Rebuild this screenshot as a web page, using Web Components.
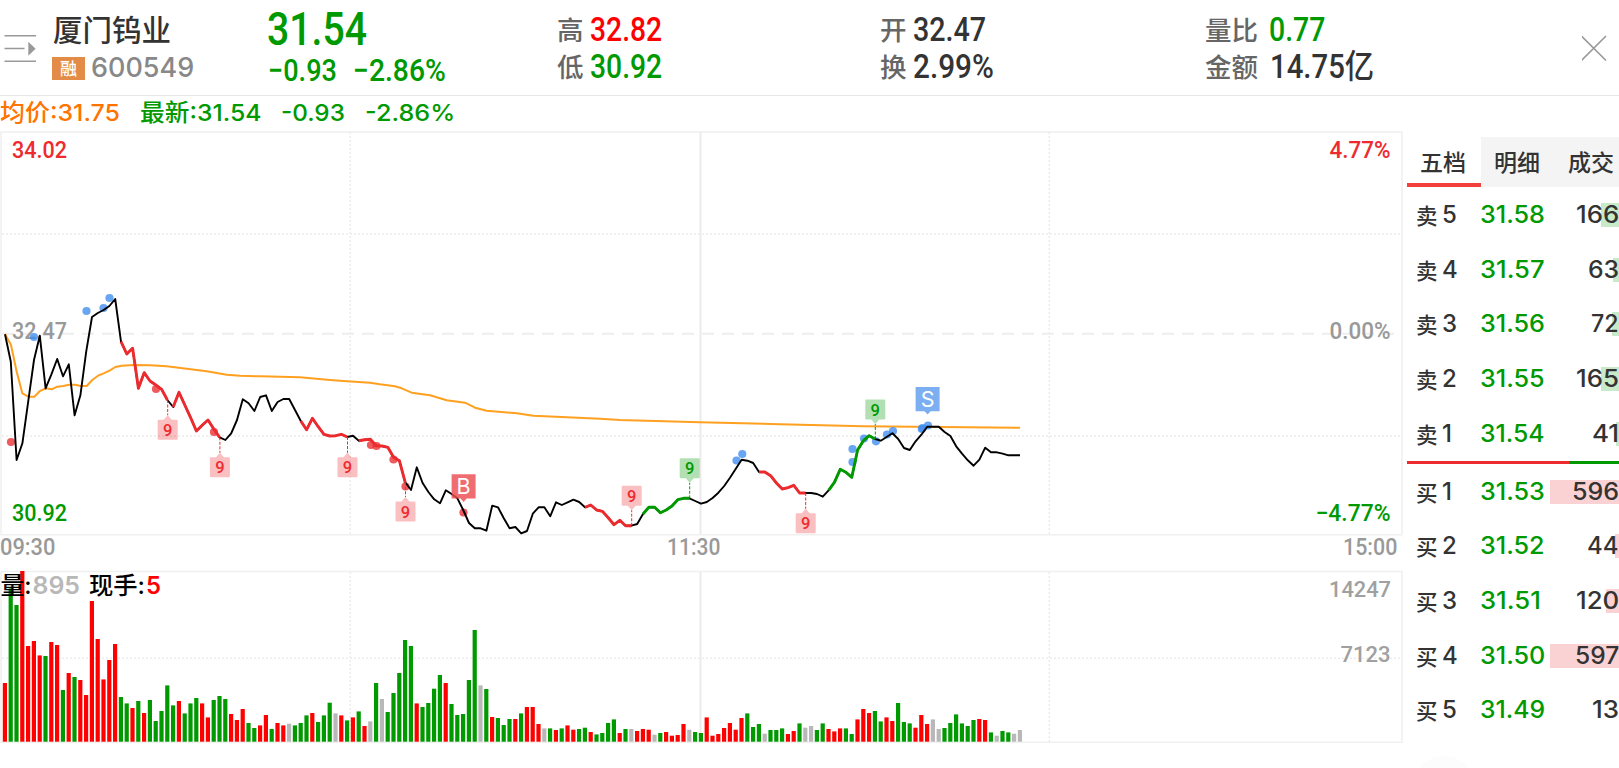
<!DOCTYPE html>
<html lang="zh-CN">
<head>
<meta charset="utf-8">
<title>厦门钨业 600549</title>
<style>
    html, body { margin: 0; height: 100%; background: #fff; overflow: hidden; }
    body { font-family: Inter, "Noto Sans CJK SC", sans-serif; color: #333; }
</style>
</head>
<body>
<stock-page></stock-page>

<script>
const STEP = 5.8;
const RED = "#ed2b2f", GREEN = "#009900";
const minuteX = minute => 5 + STEP * minute;

// one line of text, stretched to the width it is given
customElements.define("fit-text", class extends HTMLElement {
    connectedCallback() {
        let root = this.attachShadow({ mode: "open" });
        let width = +this.getAttribute("w");
        root.innerHTML = `<style>
            :host{display:block;flex:none;width:${width}px;white-space:nowrap}
            span{display:inline-block;transform-origin:0 50%}
            </style><span><slot></slot></span>`;
        let span = root.querySelector("span");
        span.style.transform = `scaleX(${width / span.offsetWidth})`;
    }
});

customElements.define("quote-pair", class extends HTMLElement {
    connectedCallback() {
        this.attachShadow({ mode: "open" }).innerHTML = `<style>
            :host{display:flex;height:37px;font:500 33px/37px Roboto,"Noto Sans CJK SC",sans-serif}
            .label{font:500 26.5px/36px "Noto Sans CJK SC",sans-serif;color:#666;margin-right:${this.getAttribute("gap") || 6}px}
            </style><span class="label">${this.getAttribute("label")}</span><slot></slot>`;
    }
});

customElements.define("quote-header", class extends HTMLElement {
    connectedCallback() {
        this.attachShadow({ mode: "open" }).innerHTML = `<style>
            :host{display:grid;box-sizing:border-box;height:96px;border-bottom:1px solid #e6e6e6;
                grid-template-columns:52px 215px 290px 323px 325px 1fr 37px}
            svg{display:block}
            .name{font:500 29.5px/42px "Noto Sans CJK SC",sans-serif;padding:7px 0 0 1px;height:42px}
            .code{display:flex;align-items:center;height:36px;font:500 27.5px/36px Inter,sans-serif;color:#888}
            .badge{width:33px;height:23px;margin:2px 6px 0 0;background:#e38c47;color:#fff;text-align:center;
                font:500 17px/22px "Noto Sans CJK SC",sans-serif}
            .price{font:500 45.5px/42px Roboto,sans-serif;color:#090;padding-top:9px;height:44px}
            .change{display:flex;gap:16px;padding-left:1px;font:500 31px/36px Roboto,sans-serif;color:#090}
            .pairs{padding-top:11px}
            .up{color:#f00}.down{color:#090}
            </style>
            <svg width="52" height="95" fill="none" stroke="#999" stroke-width="1.5">
                <path d="M4.5 35.8H36M4.5 48.6H24.5M4.5 61.2H36"/><path d="M28.3 41.7V55.7L35.6 48.7z" fill="#999" stroke="none"/>
            </svg>
            <div><div class="name">厦门钨业</div>
                <div class="code"><span class="badge">融</span><fit-text w="103">600549</fit-text></div></div>
            <div><div class="price"><fit-text w="100">31.54</fit-text></div>
                <div class="change"><fit-text w="69">−0.93</fit-text><fit-text w="93">−2.86%</fit-text></div></div>
            <div class="pairs">
                <quote-pair label="高"><fit-text class="up" w="72">32.82</fit-text></quote-pair>
                <quote-pair label="低"><fit-text class="down" w="72">30.92</fit-text></quote-pair></div>
            <div class="pairs">
                <quote-pair label="开"><fit-text w="73">32.47</fit-text></quote-pair>
                <quote-pair label="换"><fit-text w="81">2.99%</fit-text></quote-pair></div>
            <div class="pairs">
                <quote-pair label="量比" gap="11"><fit-text class="down" w="56">0.77</fit-text></quote-pair>
                <quote-pair label="金额" gap="12"><fit-text w="104">14.75亿</fit-text></quote-pair></div>
            <svg width="37" height="95" fill="none" stroke="#999" stroke-width="1.6"><path d="M-.5 36L24 60.5M24 36L-.5 60.5"/></svg>`;
    }
});

customElements.define("price-chart", class extends HTMLElement {
    // y of every minute from 09:30
    price = [334.3,361.7,460,443.3,401.7,360,335.7,388.3,374.3,359,376.3,364.3,415.3,395.3,351.7,317,313,310,306,299,
        341.7,354,348.3,388.3,372.7,381,385,389.3,400,407,392.3,405,417.7,431,425.3,420,429,437.3,440,433.3,420,
        399.3,403.3,411,397,395.3,411,402,399,399,410,421,429.7,418.3,426.7,434.3,436,435.7,434.3,437,435.7,440.7,
        439.7,439.3,445.7,446,447.3,457.3,460.7,482.3,490,467.3,483,492,499.3,503.3,490.3,494,498.3,510,523,528.3,
        528.3,530.7,505.7,507.3,518.3,528.3,527,533.3,531,513.7,507.3,507.3,516.3,502.3,505,502.3,499.7,502,507.3,
        505,510,511.3,517.7,524.7,520.3,525.7,525.7,524,514,507.3,507.3,512.7,510,506,499.7,498.3,498.3,501,503.7,
        502,498,492.7,486,477.7,468.7,459.7,460.7,463,472,472,475.7,483,489,487.7,485.3,493,493,493,494,496.7,
        490.3,482.3,469.3,472.3,477.3,450,440.7,435.7,439,440.7,437,433.3,439,448,450,441.3,434.7,426.7,426.7,426.7,
        432,436,446.3,453.7,460.3,465.7,459.7,447.7,452.3,452.3,453.7,455.3,455.3,455.3];
    average = `5,334 11,345 16.7,371.7 22.3,393.3 28.3,396.7 34.3,396.7 40,391 45.7,388.3 51.7,389.3 57.3,386.7
        63.3,386 69,384.7 75,384.7 80.7,386 86.7,386 92.3,380 98,375.7 103.7,373.3 110,370.3 115.3,367 121.7,365.7
        133.3,365 150,365.3 166.7,366.3 186.7,368.7 206.7,371.3 226.7,374.7 240,375.8 260,376.3 300,377.3 330,380
        347,381.3 370,382.7 380,384.3 395,386.3 401.7,388.3 411.7,392.7 430,395.3 446.7,400.3 465,402.7 475,407.7
        486.7,410.7 516.7,413.3 533.3,415.8 600,418.7 620,420 700,422.3 780,424.2 863,426.3 1020,427.8`;
    // nine-count runs: first minute, last minute, colour, top of the tag
    runs = [[20, 28, RED, 419.7], [29, 37, RED, 457.3], [51, 59, RED, 457.3], [61, 69, RED, 501.5],
        [100, 108, RED, 485.7], [110, 118, GREEN, 458.3], [130, 138, RED, 513.3], [142, 150, GREEN, 399.5]];
    dots = [[34, 337, 1], [86.5, 311, 1], [103.5, 308, 1], [109.5, 298, 1], [11, 442], [156, 389], [214, 432],
        [371, 445], [376.5, 446], [393.5, 459.5], [405.5, 486.5], [463.5, 512.5], [736.5, 460.5, 1], [742.3, 454, 1],
        [852.5, 449, 1], [852.5, 462, 1], [864, 438.5, 1], [876, 441.3, 1], [887, 434.5, 1], [893, 431, 1],
        [921.8, 429, 1], [922.6, 428, 1], [928, 425.5, 1]];
    line(from, to, color = "#000", width = 1.9) {
        let points = this.price.slice(from, to + 1).map((y, i) => minuteX(from + i).toFixed(1) + "," + y);
        return `<polyline points="${points.join(" ")}" stroke="${color}" stroke-width="${width}"/>`;
    }
    tag(minute, color, top) {
        let x = minuteX(minute) + .3, y = this.price[minute], below = top > y;
        let edge = below ? top : top + 20, tip = below ? top - 4.5 : top + 24.5;
        return `<path d="M${x} ${y}V${tip}" stroke="${color}" stroke-width="1" stroke-dasharray="3 1.5"/>
            <g fill="${color}"><path fill-opacity=".3" d="M${x - 4} ${edge}L${x} ${tip}L${x + 4} ${edge}z"/>
            <rect fill-opacity=".3" x="${x - 10}" y="${top}" width="20" height="20" rx="1.2"/>
            <text x="${x}" y="${top + 16}" font-size="16.5" text-anchor="middle">9</text></g>`;
    }
    trade(minute, top, color, letter) {
        let x = minuteX(minute) + .4;
        return `<path fill="${color}" fill-opacity=".82" d="M${x - 12} ${top}h24v24.2h-9L${x} ${top + 27.6}L${x - 3} ${top + 24.2}h-9z"/>
            <text class="letter" x="${x}" y="${top + 19.8}" fill="#fff" text-anchor="middle">${letter}</text>`;
    }
    connectedCallback() {
        this.attachShadow({ mode: "open" }).innerHTML = `<style>
            :host{display:block;height:406px}
            svg{display:block}
            text{font-family:Roboto,sans-serif;font-weight:500}
            .axis text{font-size:23px}
            .letter{font:400 21.5px Inter,sans-serif}
            </style>
            <svg width="1404" height="406" viewBox="0 131 1404 406" fill="none" stroke-linejoin="round">
            <g stroke="#f0f0f0" stroke-width="1.5">
                <path d="M1 132H1402V534.7H1z"/><path d="M700.5 132V534" stroke="#ebebeb" stroke-width="2"/>
                <path d="M2 234H1402M2 436H1402M350.3 132V536M1049.3 132V536" stroke-dasharray="2 2" stroke="#ececec"/>
                <path d="M2 333.7H1402" stroke-dasharray="12 8" stroke="#eee" stroke-width="2"/>
            </g>
            <g class="axis">
                <text x="12" y="157.5" textLength="55" lengthAdjust="spacingAndGlyphs" fill="${RED}">34.02</text>
                <text x="12" y="339.3" textLength="55" lengthAdjust="spacingAndGlyphs" fill="#999">32.47</text>
                <text x="12" y="521.3" textLength="55" lengthAdjust="spacingAndGlyphs" fill="#090">30.92</text>
                <text x="1329.5" y="157.5" textLength="61" lengthAdjust="spacingAndGlyphs" fill="${RED}">4.77%</text>
                <text x="1329.5" y="339.3" textLength="61" lengthAdjust="spacingAndGlyphs" fill="#999">0.00%</text>
                <text x="1315.5" y="521.3" textLength="75" lengthAdjust="spacingAndGlyphs" fill="#090">−4.77%</text>
            </g>
            <polyline points="${this.average}" stroke="#ffa020" stroke-width="2"/>
            ${this.dots.map(([x, y, sell]) => `<circle cx="${x}" cy="${y}" r="4.1" fill="${sell ? "#3d8cf0" : "#e92c30"}" fill-opacity=".78"/>`).join("")}
            ${this.line(0, 175)}
            ${this.runs.map(([from, to, color]) => this.line(from, to, color, 2.9)).join("")}
            ${this.runs.map(([, to, color, top]) => this.tag(to, color, top)).join("")}
            ${this.trade(79, 474.3, "#eb4d50", "B")}${this.trade(159, 387, "#5e9eef", "S")}
            </svg>`;
    }
});

customElements.define("volume-chart", class extends HTMLElement {
    // bar heights in thirds of a pixel, then r(ise), f(all) or n(o change) for each of them
    heights = [176,460,410,512,287,302,259,257,299,290,155,206,194,185,140,422,308,187,245,293,134,115,101,122,86,125,
        62,92,169,109,122,85,115,131,115,73,125,137,128,83,65,98,56,41,49,80,38,56,49,54,49,56,79,86,59,79,117,85,79,
        64,73,91,47,61,176,128,89,146,206,305,287,115,104,116,159,200,176,113,80,83,185,335,169,158,74,71,50,68,68,85,
        104,104,53,40,40,35,40,49,36,38,42,29,22,26,56,67,26,38,38,32,38,36,21,26,29,18,20,53,36,29,26,73,18,23,41,56,
        36,71,85,44,53,24,35,35,40,23,32,55,42,47,35,55,38,31,40,40,23,67,98,86,92,61,73,62,116,59,55,42,80,53,67,38,
        41,56,82,55,47,65,68,65,28,18,32,28,24,35];
    kinds = "rffrrrrfrr" + "frfrrrrrrr" + "ffrfrfffff" + "rfffrrfffr" + "rrffrrfrrn" +
        "fffrfffnrf" + "rfrnfnffff" + "frffffrfff" + "ffnfrfffrf" + "rrrnfrfrrf" +
        "frffffrfnr" + "rrnfrrrrnf" + "frrrrrrrff" + "fnfffrrfnn" + "ffrrrffrrr" +
        "ffrrfffrrr" + "nnffffffrr" + "fnffnn";
    connectedCallback() {
        let colors = { r: "#f00", f: "#090", n: "#b8b8b8" };
        this.attachShadow({ mode: "open" }).innerHTML = `<style>
            :host{display:block;height:174px}
            svg{display:block}
            .axis{font:500 22.5px Roboto,sans-serif;fill:#a0a0a0}
            .legend{font:600 24px Inter,"Noto Sans CJK SC",sans-serif}
            .cjk{font-weight:500}
            </style>
            <svg width="1404" height="174" viewBox="0 570 1404 174" fill="none">
            <g stroke="#f0f0f0" stroke-width="1.5">
                <path d="M1 571.5H1402V742.3H1z"/><path d="M700.5 572V742" stroke="#ebebeb" stroke-width="2"/>
                <path d="M2 658.3H1402M350.3 572V742M1049.3 572V742" stroke-dasharray="2 2" stroke="#ececec"/>
            </g>
            ${this.heights.map((h, i) => `<rect x="${(minuteX(i) - 2.2).toFixed(1)}" y="${(741.7 - h / 3).toFixed(1)}" width="4.2" height="${(h / 3).toFixed(1)}" fill="${colors[this.kinds[i]]}"/>`).join("")}
            <g class="legend">
                <text x="0.5" y="594" textLength="31" lengthAdjust="spacingAndGlyphs" class="cjk" fill="#000">量:</text>
                <text x="32.5" y="594" textLength="47.5" lengthAdjust="spacingAndGlyphs" fill="#b8b8b8">895</text>
                <text x="89" y="594" textLength="56" lengthAdjust="spacingAndGlyphs" class="cjk" fill="#000">现手:</text>
                <text x="146" y="594" textLength="15" lengthAdjust="spacingAndGlyphs" fill="#f00">5</text>
            </g>
            <g class="axis">
                <text x="1329" y="597" textLength="62" lengthAdjust="spacingAndGlyphs">14247</text>
                <text x="1340.5" y="661.8" textLength="50" lengthAdjust="spacingAndGlyphs">7123</text>
            </g>
            </svg>`;
    }
});

customElements.define("order-row", class extends HTMLElement {
    connectedCallback() {
        let bar = this.getAttribute("bar");
        let color = this.getAttribute("side") == "卖" ? "#c9eac9" : "#fbd2d3";
        this.attachShadow({ mode: "open" }).innerHTML = `<style>
            :host{display:flex;align-items:center;height:54.6px;padding-left:9px;
                font:500 24px/54px Inter,sans-serif;
                background:linear-gradient(${color},${color}) right center/${bar}px 24px no-repeat}
            .side{width:26px;font:500 21.5px/50px "Noto Sans CJK SC",sans-serif}
            .level{width:38px}
            .price{color:#090}
            .count{margin-left:auto}
            </style>
            <span class="side">${this.getAttribute("side")}</span><span class="level">${this.getAttribute("level")}</span>
            <fit-text class="price" w="${this.getAttribute("price") == "31.51" ? 61 : 65}">${this.getAttribute("price")}</fit-text>
            <fit-text class="count" w="${this.getAttribute("w")}"><slot></slot></fit-text>`;
    }
});

customElements.define("order-book", class extends HTMLElement {
    // side, level, price, count, width of the count, width of the depth bar
    rows = [["卖", 5, 31.58, 166, 43, 18], ["卖", 4, 31.57, 63, 31, 6], ["卖", 3, 31.56, 72, 28, 7],
        ["卖", 2, 31.55, 165, 43, 18], ["卖", 1, 31.54, 41, 27, 3],
        ["买", 1, 31.53, 596, 47, 69], ["买", 2, 31.52, 44, 32, 4], ["买", 3, 31.51, 120, 43, 13],
        ["买", 4, 31.5, 597, 44, 69], ["买", 5, 31.49, 13, 27, 0]];
    connectedCallback() {
        let rows = this.rows.map(([side, level, price, count, w, bar]) =>
            `<order-row side="${side}" level="${level}" price="${price.toFixed(2)}" w="${w}" bar="${bar}">${count}</order-row>`);
        this.attachShadow({ mode: "open" }).innerHTML = `<style>
            :host{display:block;padding-top:41px;width:212px;overflow:hidden}
            .tabs{display:flex;height:50px;margin-bottom:1px;font:500 23px/49px "Noto Sans CJK SC",sans-serif;background:#f4f4f4}
            .tabs span{box-sizing:border-box;flex:none;width:74px;padding-left:13px}
            .tabs .on{background:#fff;border-bottom:4px solid #f2403c}
            .split{height:3.5px;background:linear-gradient(90deg,#ed2b2f 162px,#090 0)}
            .more{width:62px;height:62px;margin:19px 0 0 6px;border-radius:50%;background:#fcfcfc}
            </style>
            <div class="tabs"><span class="on">五档</span><span>明细</span><span>成交</span></div>
            ${rows.slice(0, 5).join("")}<div class="split"></div>${rows.slice(5).join("")}
            <div class="more"></div>`;
    }
});

customElements.define("stock-page", class extends HTMLElement {
    connectedCallback() {
        this.attachShadow({ mode: "open" }).innerHTML = `<style>
            :host{display:block;width:1619px;height:768px;overflow:hidden}
            main{display:grid;grid-template-columns:1407px 212px}
            .info{display:flex;height:35px;font:500 23.5px/33px Inter,"Noto Sans CJK SC",sans-serif;color:#090}
            .average{color:#ff7300;margin-right:20px}
            .latest{margin-right:20px}
            .change{margin-right:20px}
            .times{display:grid;grid-template-columns:667px 676px 1fr;height:33px;
                font:500 23px/22px Roboto,sans-serif;color:#999}
            </style>
            <quote-header></quote-header>
            <main>
                <div>
                    <div class="info">
                        <fit-text class="average" w="120">均价:31.75</fit-text><fit-text class="latest" w="121">最新:31.54</fit-text>
                        <fit-text class="change" w="64">-0.93</fit-text><fit-text w="90">-2.86%</fit-text>
                    </div>
                    <price-chart></price-chart>
                    <div class="times"><fit-text w="55">09:30</fit-text><fit-text w="53">11:30</fit-text><fit-text w="54">15:00</fit-text></div>
                    <volume-chart></volume-chart>
                </div>
                <order-book></order-book>
            </main>`;
    }
});
</script>
</body>
</html>
